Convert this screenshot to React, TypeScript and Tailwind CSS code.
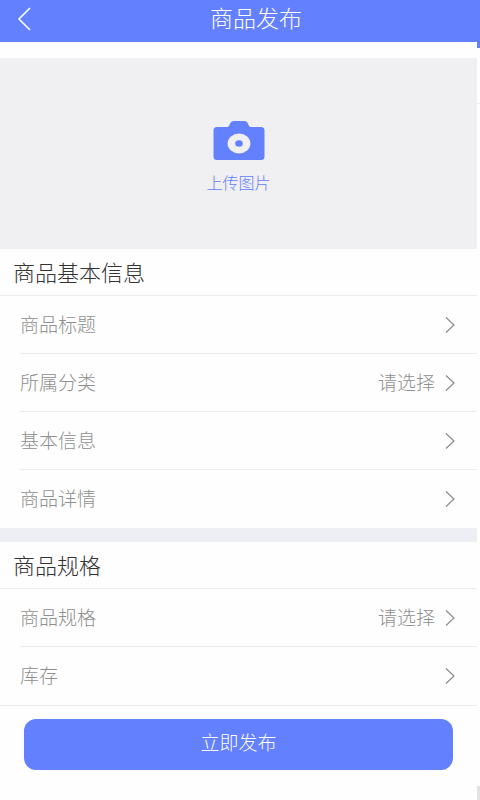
interface FieldRow {
  label: string;
  hint?: string;
}

interface FormSectionProps {
  title: string;
  rows: FieldRow[];
  closed?: boolean;
}

const basicRows: FieldRow[] = [
  { label: '商品标题' },
  { label: '所属分类', hint: '请选择' },
  { label: '基本信息' },
  { label: '商品详情' },
];

const specRows: FieldRow[] = [{ label: '商品规格', hint: '请选择' }, { label: '库存' }];

function CameraIcon() {
  return (
    <svg aria-hidden="true" className="h-10 w-[52px]" viewBox="0 0 52 40">
      <path
        d="M4 7h10c1.500 0 2-.8 2.500-2.200C17.300 2.300 18.700 1 21 1h10c2.300 0 3.700 1.300 4.500 3.800C36 6.200 36.500 7 38 7h10a3.500 3.500 0 0 1 3.500 3.500v26A3.500 3.500 0 0 1 48 40H4a3.500 3.500 0 0 1-3.500-3.500v-26A3.500 3.500 0 0 1 4 7Z"
        fill="#6380ff"
      />
      <ellipse cx="26" cy="23.500" fill="#f0eff2" rx="11.400" ry="10" />
      <ellipse cx="26" cy="23.500" fill="#6380ff" rx="3.800" ry="3.200" />
    </svg>
  );
}

function ChevronIcon() {
  return (
    <svg
      aria-hidden="true"
      className="h-4 w-[10px]"
      fill="none"
      stroke="#8c8c8c"
      strokeWidth="1.2"
      viewBox="0 0 10 16"
    >
      <path d="m1 .5 8 7.500-8 7.500" />
    </svg>
  );
}

function FormSection({ title, rows, closed = false }: FormSectionProps) {
  return (
    <section>
      <h2 className="flex h-[47px] items-center border-b border-[#ececf0] px-[13px] pb-[2px] text-[22px] font-light text-[#333333]">
        {title}
      </h2>
      <ul className={closed ? 'border-b border-[#ececf0]' : ''}>
        {rows.map((row) => (
          <li className="group pl-5" key={row.label}>
            <button
              className="flex h-[58px] w-full items-center border-b border-[#ececf0] pr-[22px] text-[19px] font-light text-[#8f8f8f] group-last:border-transparent"
              type="button"
            >
              <span>{row.label}</span>
              <span className="ml-auto mr-[10px]">{row.hint}</span>
              <ChevronIcon />
            </button>
          </li>
        ))}
      </ul>
    </section>
  );
}

export default function App() {
  return (
    <div className="flex min-h-screen flex-col bg-[#fefefe] font-['Noto_Sans_CJK_SC',sans-serif]">
      <header className="grid h-[42px] grid-cols-[32px_1fr_32px] items-center bg-[#6380ff] pb-2 pl-4 text-white">
        <button aria-label="返回" type="button">
          <svg
            className="mt-1 h-6 w-4"
            fill="none"
            stroke="currentColor"
            strokeWidth="1.6"
            viewBox="0 0 16 24"
          >
            <path d="M14 1 3 12l11 11" />
          </svg>
        </button>
        <h1 className="pl-4 text-center text-[23px] leading-8 font-light">商品发布</h1>
      </header>

      <div className="flex flex-1">
        <main className="flex-1 pt-4">
          <button
            className="flex h-[191px] w-full flex-col items-center justify-center gap-[10px] bg-[#f0eff2] pt-[6px] text-base font-light text-[#6380ff]"
            type="button"
          >
            <CameraIcon />
            上传图片
          </button>
          <FormSection rows={basicRows} title="商品基本信息" />
          <div className="h-[14px] bg-[#eeeff4]" />
          <FormSection closed rows={specRows} title="商品规格" />
          <div className="px-6 py-[13px]">
            <button
              className="h-[51px] w-full rounded-xl bg-[#6380ff] pb-1 text-[19px] font-light text-white"
              type="button"
            >
              立即发布
            </button>
          </div>
        </main>
        <div aria-hidden="true" className="flex w-[3px] flex-col">
          <div className="h-[6px] bg-[#6380ff]" />
          <div className="h-14 border-b border-[#ececf0]" />
          <div className="mt-auto h-[14px] bg-[#e2e1e6]" />
        </div>
      </div>
    </div>
  );
}
